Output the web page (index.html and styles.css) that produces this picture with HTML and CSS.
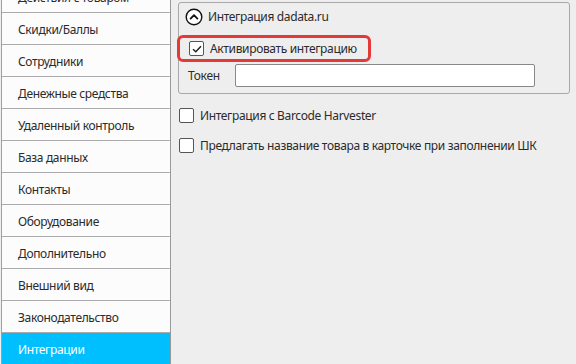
FILE: index.html
```html
<!DOCTYPE html>
<html lang="ru">
<head>
    <meta charset="UTF-8">
    <title>Настройки — Интеграции</title>
    <link rel="stylesheet" href="styles.css">
</head>
<body>
    <div class="sidebar">
        <ul class="menu">
            <li>Действия с товаром</li>
            <li>Скидки/Баллы</li>
            <li>Сотрудники</li>
            <li>Денежные средства</li>
            <li>Удаленный контроль</li>
            <li>База данных</li>
            <li>Контакты</li>
            <li>Оборудование</li>
            <li>Дополнительно</li>
            <li>Внешний вид</li>
            <li>Законодательство</li>
            <li class="active">Интеграции</li>
        </ul>
    </div>

    <div class="content">
        <div class="group">
            <div class="group-title">
                <svg class="collapse" width="18" height="18" viewBox="0 0 18 18">
                    <circle cx="9" cy="9" r="7.8" fill="#fff" stroke="#111" stroke-width="1.4"/>
                    <path d="M5.6 10.6 L9 7.2 L12.4 10.6" fill="none" stroke="#111" stroke-width="1.8" stroke-linecap="round" stroke-linejoin="round"/>
                </svg>
                <span>Интеграция dadata.ru</span>
            </div>

            <div class="highlight">
                <label class="check">
                    <span class="box checked">
                        <svg width="10" height="8" viewBox="0 0 10 8">
                            <path d="M1 4.2 L3.8 6.8 L9 1.2" fill="none" stroke="#222" stroke-width="1.5"/>
                        </svg>
                    </span>
                    Активировать интеграцию
                </label>
            </div>

            <div class="token-row">
                <span class="token-label">Токен</span>
                <input type="text" class="token-input">
            </div>
        </div>

        <label class="check option">
            <span class="box"></span>
            Интеграция с Barcode Harvester
        </label>
        <label class="check option">
            <span class="box"></span>
            Предлагать название товара в карточке при заполнении ШК
        </label>
    </div>
</body>
</html>
```

FILE: styles.css
```css
body {
    margin: 0;
    height: 364px;
    overflow: hidden;
    display: flex;
    background-color: #eeeeee;
    font-family: "Noto Sans", "Open Sans", sans-serif;
    font-size: 12px;
    letter-spacing: -0.35px;
    color: #2b2b2b;
}

.sidebar {
    width: 168px;
    flex-shrink: 0;
    border-left: 1px solid #a0a0a0;
    border-right: 1px solid #999;
    margin-left: 1px;
    background-color: #fcfcfc;
    overflow: hidden;
}

.menu {
    list-style: none;
    margin: -19px 0 0 0;
    padding: 0;
}

.menu li {
    height: 31px;
    line-height: 33px;
    padding-left: 16px;
    border-bottom: 1px solid #ababab;
    white-space: nowrap;
}

.menu li.active {
    background-color: #00bfff;
    color: #fff;
    border-bottom: none;
}

.content {
    flex: 1;
    padding: 2px 6px 0 7px;
}

.group {
    height: 90px;
    border: 1px solid #a8a8a8;
    border-radius: 3px;
    padding: 0 0 0 5px;
}

.group-title {
    display: flex;
    align-items: center;
    height: 27px;
    padding-left: 1px;
}

.collapse {
    margin-right: 5px;
    margin-top: 1px;
}

.highlight {
    display: inline-flex;
    align-items: center;
    height: 21px;
    margin: 5px 0 0 -7px;
    border: 3px solid #e33a38;
    border-radius: 6px;
    padding: 0 11px 0 9px;
}

.check {
    display: flex;
    align-items: center;
    white-space: nowrap;
}

.box {
    width: 13px;
    height: 13px;
    border: 1px solid #555;
    border-radius: 2px;
    background-color: #fff;
    margin-right: 6px;
    display: flex;
    align-items: center;
    justify-content: center;
}

.token-row {
    display: flex;
    align-items: center;
    margin-top: 2px;
}

.token-label {
    width: 47px;
    padding-left: 4px;
}

.token-input {
    width: 300px;
    height: 23px;
    box-sizing: border-box;
    margin: 0;
    padding: 0;
    border: 1px solid #888;
    border-radius: 2px;
    background-color: #fff;
}

.option {
    height: 30px;
    margin-left: 1px;
}

.option:first-of-type {
    margin-top: 6px;
}
```
